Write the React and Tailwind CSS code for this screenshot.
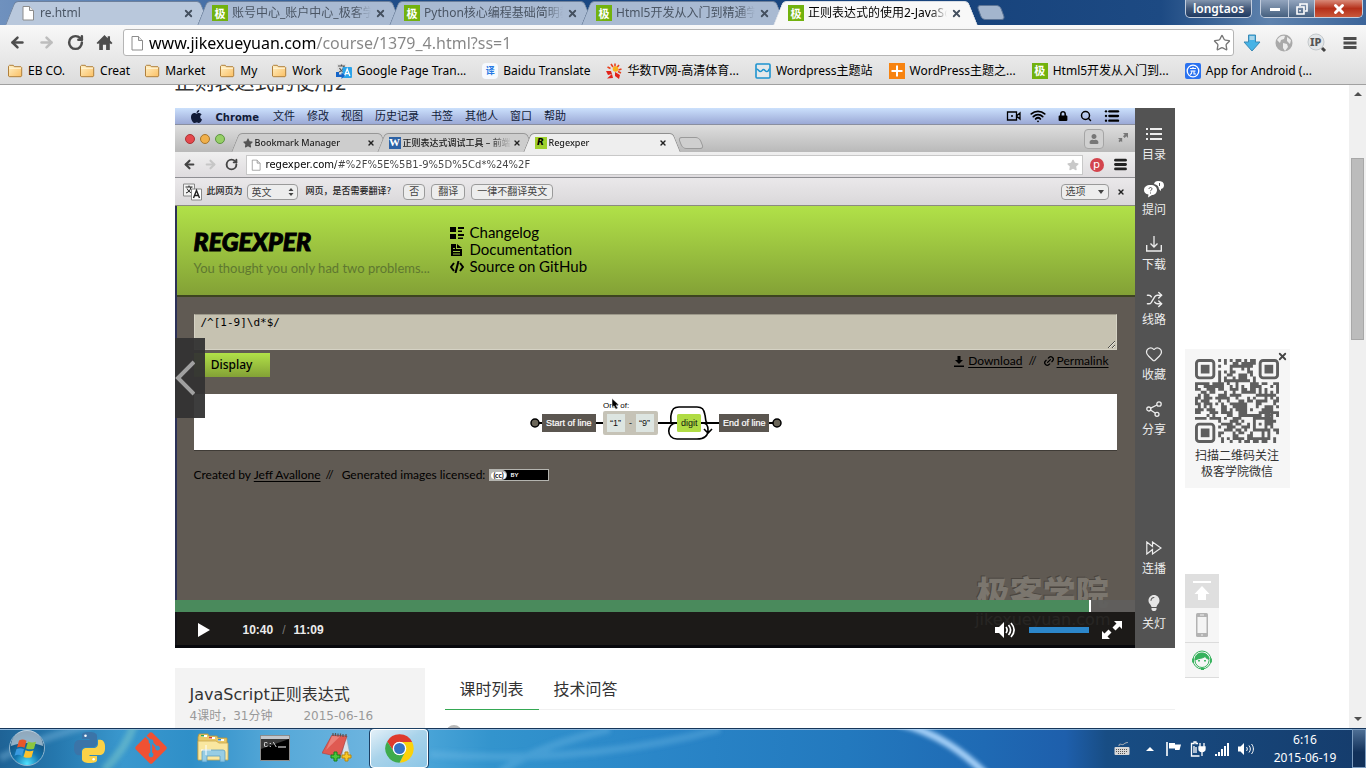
import React from "react";
import {
  ArrowLeft, ArrowRight, RotateCw, Star, Menu, Search, Wifi,
  List, Heart, Shuffle, Link2, X,
} from "lucide-react";
import { FaApple, FaGitAlt, FaStar, FaLightbulb, FaUser, FaLock } from "react-icons/fa";

const UI = "font-['Noto_Sans','Noto_Sans_CJK_SC',sans-serif]";
const MAC = "font-['DejaVu_Sans','Noto_Sans_CJK_SC',sans-serif]";
const GOTHIC = "font-['Lato','Noto_Sans_CJK_SC',sans-serif]";

/* ---------- shared pieces ---------- */

function TabShape({ paint }) {
  return (
    <span aria-hidden="true" className="absolute inset-0">
      <span className={`absolute inset-y-0 left-[5px] w-8 -skew-x-[22deg] rounded-tl-[4px] border-l border-t ${paint}`} />
      <span className={`absolute inset-y-0 right-[5px] w-8 skew-x-[22deg] rounded-tr-[4px] border-r border-t ${paint}`} />
      <span className={`absolute inset-y-0 left-5 right-5 border-t ${paint}`} />
    </span>
  );
}

function JiIcon() {
  return (
    <span className="flex size-4 shrink-0 items-center justify-center bg-[#72b20e] text-[11px] leading-none font-bold text-white">
      极
    </span>
  );
}

function PageIcon({ className }) {
  return (
    <svg viewBox="0 0 16 16" className={className} fill="#fff" stroke="#8c8c8c">
      <path d="M3 1.5h6.5l4 4v9.5H3z" />
      <path d="M9.5 1.5v4h4" fill="#e8e8e8" />
    </svg>
  );
}

function FolderIcon() {
  return (
    <svg viewBox="0 0 16 16" className="size-4 shrink-0">
      <defs>
        <linearGradient id="folder" x1="0" y1="0" x2="1" y2="1">
          <stop offset="0" stopColor="#fff0c4" />
          <stop offset="1" stopColor="#fbbf63" />
        </linearGradient>
      </defs>
      <path d="M1.5 13V3.2l1-.9h3.8l1 1.4h6.6l.8.8V13l-.7.7H2.2z" fill="url(#folder)" stroke="#b0803c" />
      <path d="M2.2 5.2h11.8" stroke="#fff8e0" />
    </svg>
  );
}

/* ---------- browser header ---------- */

const TABS = [
  { title: "re.html", page: true },
  { title: "账号中心_账户中心_极客学院" },
  { title: "Python核心编程基础简明教程" },
  { title: "Html5开发从入门到精通学习" },
  { title: "正则表达式的使用2-JavaScript", active: true },
];

function BrowserTab({ tab }) {
  const paint = tab.active
    ? "border-[#d8dde4] bg-[#f8f8f8]"
    : tab.page
      ? "border-[#6d809c] bg-[#b9c8dc]"
      : "border-[#6d809c] bg-[#a9bad2]";
  return (
    <div className={`relative -mr-[13px] h-full w-[205px] ${tab.active ? "z-10" : ""}`}>
      <TabShape paint={paint} />
      <div className="relative flex h-full items-center gap-1 pr-4 pl-[15px]">
        <button className={`flex min-w-0 flex-1 items-center gap-1 text-left ${tab.active ? "text-black" : "text-[#4a5564]"}`}>
          {tab.page ? <PageIcon className="size-4 shrink-0" /> : <JiIcon />}
          <span className="flex-1 overflow-hidden whitespace-nowrap [mask-image:linear-gradient(90deg,#000_88%,transparent)]">
            {tab.title}
          </span>
        </button>
        <button aria-label={`关闭 ${tab.title}`} className="text-[#44505f]">
          <X className="size-[11px]" strokeWidth={4} />
        </button>
      </div>
    </div>
  );
}

const BOOKMARKS = [
  { t: "EB CO.", k: "folder" },
  { t: "Creat", k: "folder" },
  { t: "Market", k: "folder" },
  { t: "My", k: "folder" },
  { t: "Work", k: "folder" },
  { t: "Google Page Tran...", k: "gt" },
  { t: "Baidu Translate", k: "bd" },
  { t: "华数TV网-高清体育...", k: "hs" },
  { t: "Wordpress主题站", k: "wp" },
  { t: "WordPress主题之...", k: "plus" },
  { t: "Html5开发从入门到...", k: "ji" },
  { t: "App for Android (...", k: "app" },
];

function BookmarkIcon({ k }) {
  if (k === "folder") return <FolderIcon />;
  if (k === "ji") return <JiIcon />;
  if (k === "gt")
    return (
      <svg viewBox="0 0 16 16" className="size-4 shrink-0">
        <path d="M1 1h9v10H1z" fill="#dcdcdc" />
        <path d="M2 3h7M5.5 1.5V3M3 9c3-1 4.5-3 5-6M3.5 5c1 2 2.5 3.5 4 4" stroke="#555" fill="none" strokeWidth="1.2" />
        <rect x="6.5" y="4" width="9.5" height="11" rx="1" fill="#2aa3ea" />
        <path d="M8.500 13l2.700-7 2.700 7M9.500 10.700h3.500" stroke="#fff" fill="none" strokeWidth="1.3" />
        <path d="M0 9h3v2.500h2.500V9.500L9 12.500 5.500 16v-2H0z" fill="#1464c8" />
      </svg>
    );
  if (k === "bd")
    return (
      <span className="flex size-4 shrink-0 items-center justify-center rounded-sm bg-[#f6f9fd] text-[9px] leading-none font-bold text-[#2577e3]">
        译
      </span>
    );
  if (k === "hs")
    return (
      <svg viewBox="0 0 16 16" className="size-4 shrink-0">
        <g stroke="#e8401e" strokeWidth="1.6">
          <path d="M5 1l2 3M9 .5v3M13 2l-2 2.500M15.500 6l-3 1M1.500 4l3 1.500M15 10l-3-1.500" />
        </g>
        <circle cx="9.500" cy="6" r="2.800" fill="#f9b01b" />
        <path d="M0 8l5 0 1 3-4 1zM1 15.500l5-4.500 1 4zM9 9l5 3-1 4-4-3z" fill="#e2231a" />
      </svg>
    );
  if (k === "wp")
    return (
      <svg viewBox="0 0 16 16" className="size-4 shrink-0">
        <rect x="1" y="1" width="14" height="14" rx="1" fill="#e4e8ea" stroke="#1d93cf" strokeWidth="1.6" />
        <path d="M1.500 6c2 0 2 2.500 4 2.500S7 6.500 8.500 6.500 10 8.500 12 8.500 13.500 6 14.500 6" fill="none" stroke="#1d93cf" strokeWidth="1.5" />
      </svg>
    );
  if (k === "plus")
    return (
      <svg viewBox="0 0 16 16" className="size-4 shrink-0">
        <path d="M0 0h16v16H0z" fill="#f78310" />
        <path d="M8 2.500v11M2.500 8h11" stroke="#fff" strokeWidth="2" />
      </svg>
    );
  return (
    <svg viewBox="0 0 16 16" className="size-4 shrink-0">
      <rect width="16" height="16" rx="2" fill="#2a72f0" />
      <circle cx="8" cy="8" r="5.800" fill="none" stroke="#fff" strokeWidth="1.3" />
      <path d="M5 5.500h6M8 4v1.500M5.500 8h5M7 8c0 2-.5 3-2 3.500M9 8v3h2" stroke="#fff" fill="none" strokeWidth="1.1" />
    </svg>
  );
}

function BrowserHeader() {
  return (
    <header className={`shrink-0 text-[12px] ${UI}`}>
      <div className="flex h-[25px] items-start justify-between bg-[linear-gradient(90deg,#6f91be_0,#4f78ae_12%,#1c4a86_30%,#17437c_70%,#1d4a83_85%,#5f83ae_93%,#3c659a_100%)]">
        <nav aria-label="标签页" className="flex h-full pt-px pl-[5px]">
          {TABS.map((t) => <BrowserTab key={t.title} tab={t} />)}
          <button aria-label="新标签页" className="mt-1 ml-[14px] h-[15px] w-6 skew-x-[20deg] rounded-sm border border-[#5d7596] bg-[#a3b5cd]" />
        </nav>
        <div className="flex gap-2 pr-[3px] text-white">
          <button className="h-[18px] w-[67px] rounded-b-[5px] border border-t-0 border-[#c3cede] bg-[linear-gradient(#8295ae,#43597a_50%,#1f3b62)] text-[12px] leading-[15px] font-semibold">
            longtaos
          </button>
          <div className="flex h-[18px] overflow-hidden rounded-b-[5px] border border-t-0 border-[#c3cede]">
            <button aria-label="最小化" className="flex w-7 items-end justify-center border-r border-[#c3cede] bg-[linear-gradient(#93a5be,#45607f)] pb-1.5">
              <span className="h-[3px] w-2.5 bg-white" />
            </button>
            <button aria-label="还原" className="flex w-[26px] items-center justify-center border-r border-[#c3cede] bg-[linear-gradient(#93a5be,#45607f)]">
              <svg viewBox="0 0 12 12" className="size-3 fill-none stroke-white stroke-[1.6]"><path d="M4 3V1h7v7H9M1 4h7v7H1zM4 7v1.500" /></svg>
            </button>
            <button aria-label="关闭" className="flex w-[47px] items-center justify-center bg-[linear-gradient(#d98a78,#b5301a_50%,#c9583a)]">
              <X className="size-3.5" strokeWidth={5} />
            </button>
          </div>
        </div>
      </div>
      <div className="border-b border-[#a0a0a0] bg-[linear-gradient(#f8f8f8,#dcdcdc)]">
        <div className="flex items-center pt-1 pr-[7px] pl-[9px] text-[#4d4d4d]">
          <div className="flex gap-3">
            <button aria-label="后退"><ArrowLeft className="size-[17px]" strokeWidth={3.5} /></button>
            <button aria-label="前进" className="text-[#bdbdbd]"><ArrowRight className="size-[17px]" strokeWidth={3.5} /></button>
            <button aria-label="刷新"><RotateCw className="size-[17px]" strokeWidth={3.5} /></button>
            <button aria-label="主页">
              <svg viewBox="0 0 16 16" className="size-[17px] fill-current"><path d="M8 1 .5 8.500l1.200 1L3 8.600V15h3.500v-5h3v5H13V8.600l1.300 1 1.200-1.100-2.300-2.300V2H11v2z" /></svg>
            </button>
          </div>
          <form className="ml-2.5 flex h-[27px] flex-1 items-center gap-1 rounded-[3px] border border-[#b5b5b5] bg-white px-[5px]" onSubmit={(e) => e.preventDefault()}>
            <PageIcon className="size-4 shrink-0" />
            <input
              aria-label="地址"
              defaultValue="www.jikexueyuan.com/course/1379_4.html?ss=1"
              className="h-full min-w-0 flex-1 bg-[linear-gradient(90deg,#000_168px,#858585_168px)] bg-clip-text text-[16px] text-transparent outline-none"
            />
            <button aria-label="加入书签" type="button" className="pr-px text-[#777]"><Star className="size-[18px] -mr-1" strokeWidth={1.8} /></button>
          </form>
          <div className="flex items-center gap-[14px] pl-[9px]">
            <button aria-label="下载">
              <svg viewBox="0 0 18 18" className="size-[18px]"><path d="M5.500 1h7v7H17l-8 9-8-9h4.500z" fill="#46b3e6" stroke="#3989b5" /><path d="M6.500 2h5v4h-5z" fill="#a7d3e8" /></svg>
            </button>
            <button aria-label="全球">
              <svg viewBox="0 0 18 18" className="size-[18px]"><circle cx="9" cy="9" r="8.500" fill="#a9a9a9" /><path d="M2 6c2-4 6-5 8-4l-1 3-3 1-1 3zM8 9l4 1 1 3-3 4-2-3zM12 3l4 3-1 4-3-3z" fill="#ececec" /></svg>
            </button>
            <button aria-label="IP">
              <svg viewBox="0 0 20 20" className="size-5"><circle cx="9" cy="9" r="8" fill="#e3e6e8" stroke="#c3c8cb" /><path d="m15 15 3 3" stroke="#444" strokeWidth="3" /><text x="3" y="13" fontSize="11" fontWeight="800" fill="#555">IP</text></svg>
            </button>
            <button aria-label="菜单">
              <svg viewBox="0 0 14 14" className="mx-0.5 size-3.5 fill-current"><path d="M.5 1h13v3H.5zM.5 5.500h13v3H.5zM.5 10h13v3H.5z" /></svg>
            </button>
          </div>
        </div>
        <nav aria-label="书签栏" className="flex h-7 items-center gap-[14px] overflow-hidden pt-px pl-[7px] text-black">
          {BOOKMARKS.map((b) => (
            <a key={b.t} href="#" className={`flex items-center gap-[5px] whitespace-nowrap ${b.k === "folder" ? "" : "mr-0.5"}`}>
              <BookmarkIcon k={b.k} />
              {b.t}
            </a>
          ))}
        </nav>
      </div>
    </header>
  );
}

/* ---------- video picture ---------- */

const MAC_TABS = [
  { title: "Bookmark Manager", icon: "star" },
  { title: "正则表达式调试工具 – 前端网", icon: "w" },
  { title: "Regexper", icon: "r", active: true },
];

function MacTab({ tab }) {
  return (
    <div className={`relative -mr-[14px] h-full w-40 ${tab.active ? "z-10" : ""}`}>
      <TabShape paint={tab.active ? "border-[#8f8f8f] bg-[#eeeeee]" : "border-[#979797] bg-[#cdcdcd]"} />
      <div className="relative flex h-full items-center gap-0.5 pr-[15px] pl-[13px]">
        <button className="flex min-w-0 flex-1 items-center gap-0.5 text-left text-[#222]">
          {tab.icon === "star" && <FaStar className="size-2.5 shrink-0 text-[#555]" />}
          {tab.icon === "w" && <span className="flex size-3 shrink-0 items-center justify-center bg-[#2d62a5] font-['Liberation_Serif',serif] text-[11px] font-bold text-white">W</span>}
          {tab.icon === "r" && <span className="flex size-3 shrink-0 items-center justify-center bg-[#9fd02c] text-[9px] font-bold italic text-black">R</span>}
          <span className="flex-1 overflow-hidden font-['Noto_Sans','Noto_Sans_CJK_SC',sans-serif] text-[9px] font-medium whitespace-nowrap [mask-image:linear-gradient(90deg,#000_80%,transparent)]">{tab.title}</span>
        </button>
        <button aria-label={`关闭 ${tab.title}`}><X className="size-2" strokeWidth={4} /></button>
      </div>
    </div>
  );
}

function MacBrowser() {
  return (
    <div className={`text-[9px] text-[#222] ${MAC}`}>
      <div className="flex h-4 items-center bg-[linear-gradient(#cbe0fc,#9ba9d6)] pr-[15px] pl-[14px] text-[11px] text-[#111b38]">
        <FaApple className="size-[15px]" />
        <div className="ml-3 flex items-center gap-3 pt-0.5 whitespace-nowrap">
          <span className="mr-0.5 text-[10px] font-bold">Chrome</span>
          <span>文件</span><span>修改</span><span>视图</span><span>历史记录</span><span>书签</span><span>其他人</span><span>窗口</span><span>帮助</span>
        </div>
        <div className="ml-auto flex items-center gap-3 text-black">
          <svg viewBox="0 0 16 12" className="h-3 w-4 fill-none stroke-current stroke-[1.3]"><path d="M1.500 2h9v8h-9zM10.500 6l3.500-3v6z" /><path d="M5 5.300h2v1.400H5z" className="fill-current stroke-none" /></svg>
          <Wifi className="-ml-1 size-4" strokeWidth={2.8} />
          <FaLock className="size-2.5" />
          <Search className="size-3" strokeWidth={3} />
          <List className="size-4" strokeWidth={3.5} />
        </div>
      </div>
      <div className="flex h-[28px] border-t border-[#8a8fa0] bg-[linear-gradient(#dedede,#b9b9b9)] pl-[10px]">
        <div className="flex items-center gap-[5px]">
          <span className="size-[10px] rounded-full border border-[#a33] bg-[#e5484d]" />
          <span className="size-[10px] rounded-full border border-[#a8752c] bg-[#f0b04a]" />
          <span className="size-[10px] rounded-full border border-[#5c9440] bg-[#96cf66]" />
        </div>
        <div className="flex pt-2 pl-[5px]">
          {MAC_TABS.map((t) => <MacTab key={t.title} tab={t} />)}
          <button aria-label="新标签" className="mt-1 ml-3 h-3 w-[22px] skew-x-[22deg] rounded-sm border border-[#9a9a9a] bg-[#cfcfcf]" />
        </div>
        <div className="ml-auto flex items-center gap-[14px] pr-[7px] text-[#777]">
          <button aria-label="用户" className="flex size-5 items-center justify-center rounded-sm border border-[#a5a5a5] bg-[#d0d0d0]"><FaUser className="size-2.5" /></button>
          <svg viewBox="0 0 12 12" className="mb-0.5 size-2.5 fill-current"><path d="M6 0h6v6l-2-2-2 2-2-2 2-2zM0 6h5v5l-1.500-1.500L2 11 .5 9.500 2 8z" /></svg>
        </div>
      </div>
      <div className="flex h-[26px] items-center border-b border-[#8f8f93] bg-[linear-gradient(#efefef,#dfdcdf)] pr-[7px] pl-2 text-[#444]">
        <div className="flex gap-2">
          <ArrowLeft className="size-[13px]" strokeWidth={4} />
          <ArrowRight className="size-[13px] text-[#c6c6c6]" strokeWidth={4} />
          <RotateCw className="size-[13px]" strokeWidth={3.5} />
        </div>
        <div className="ml-2 flex h-5 flex-1 items-center gap-1 border border-[#c8c8c8] bg-white px-[3px]">
          <PageIcon className="size-3" />
          <input aria-label="视频地址" defaultValue="regexper.com/#%2F%5E%5B1-9%5D%5Cd*%24%2F" className="min-w-0 flex-1 bg-[linear-gradient(90deg,#000_70px,#444_70px)] bg-clip-text text-[10px] text-transparent outline-none" />
          <FaStar className="size-3 text-[#c9c9c9]" />
        </div>
        <span className="ml-[7px] flex size-[14px] items-center justify-center rounded-full bg-[#d3444d] text-[11px] leading-none text-white">p</span>
        <Menu className="ml-[9px] size-[15px] text-[#222]" strokeWidth={4.5} />
      </div>
      <div className="flex h-[28px] items-center border-b border-[#8b8b80] bg-[linear-gradient(#eae8ea,#dad8da)] pr-2.5 pl-2 whitespace-nowrap">
        <svg viewBox="0 0 20 18" className="h-[18px] w-5 text-[#333]">
          <path d="M.5 1h11v12H.5z" fill="#f3f3f3" stroke="#888" />
          <path d="M2.500 4h7M6 2.500V4M3 10c3-1 4.500-3 5-6M4 5.500c1 2 2.500 3.500 4.500 4.500" stroke="#222" fill="none" />
          <path d="M8.500 6h10v11h-10z" fill="#fff" stroke="#888" />
          <path d="m10.500 15 3-7.500 3 7.500m-5-2.500h4" stroke="#222" fill="none" strokeWidth="1.4" />
        </svg>
        <label htmlFor="lang" className="ml-1 font-medium">此网页为</label>
        <select id="lang" className="ml-1 h-4 w-[51px] appearance-none rounded-sm border border-[#9a9a9a] bg-[#ededed] px-1 text-[10px] text-[#444]">
          <option>英文</option>
        </select>
        <svg viewBox="0 0 6 8" aria-hidden="true" className="-ml-2.5 h-2 w-1.5 fill-[#444]"><path d="M3 0l2.500 3h-5zM3 8l2.500-3h-5z" /></svg>
        <label htmlFor="lang" className="ml-3 font-medium">网页，是否需要翻译?</label>
        <div className="ml-3 flex gap-1.5 text-[10px] leading-[14px] text-[#444]">
          <button className="rounded-sm border border-[#9a9a9a] bg-[#ededed] px-[5px]">否</button>
          <button className="rounded-sm border border-[#9a9a9a] bg-[#ededed] px-1.5">翻译</button>
          <button className="rounded-sm border border-[#9a9a9a] bg-[#ededed] px-[5px]">一律不翻译英文</button>
        </div>
        <button className="ml-auto flex h-4 w-12 items-center justify-between rounded-sm border border-[#9a9a9a] bg-[#ededed] px-1 text-[10px] text-[#444]">
          选项<svg viewBox="0 0 6 4" className="h-1 w-1.5 fill-[#444]"><path d="M0 0h6L3 4z" /></svg>
        </button>
        <button aria-label="关闭翻译栏" className="ml-2"><X className="size-2" strokeWidth={4} /></button>
      </div>
    </div>
  );
}

function Diagram() {
  return (
    <svg viewBox="0 0 254 56" className="h-14 w-[254px] font-['Liberation_Sans',sans-serif] text-[9px]">
      <g fill="none" stroke="#000" strokeWidth="2">
        <path d="M6 29h72M128 29h22M166 29h28M240 29h10" />
        <path d="M139 29c5 0 2-3 3-8 1-6 3-8 8-8h18c5 0 7 2 8 8 1 5 0 8 4 8" strokeWidth="1.6" />
        <path d="M148 29c-11 0-11 16 0 16h20c8 0 11-3 11-9 0-4-1-7-5-7M175 35l4 4 4-4" strokeWidth="1.6" />
      </g>
      <g stroke="#000" strokeWidth="1.5" fill="#6b6659"><circle cx="6" cy="29" r="4" /><circle cx="248" cy="29" r="4" /></g>
      <path d="M13 20h54v18H13zM190 20h50v18h-50z" fill="#5b5650" />
      <rect x="74" y="17" width="55" height="24" rx="2" fill="#c6c3b7" />
      <path d="M78 20h18v18H78zM107 20h18v18h-18z" fill="#dde5e1" />
      <rect x="148" y="20" width="24" height="18" rx="1.5" fill="#b0dc44" />
      <g fill="#fff" stroke="#fff" strokeWidth=".2"><text x="17" y="32">Start of line</text><text x="194" y="32">End of line</text></g>
      <g fill="#111"><text x="81" y="32">“1”</text><text x="100" y="32">-</text><text x="110" y="32">“9”</text><text x="152" y="32">digit</text></g>
      <text x="74" y="14" className="text-[8px]">One of:</text>
      <path d="M83 4.500v9l2-1.700 1.800 3.500 1.800-1-1.600-3.300h3z" stroke="#fff" strokeWidth=".5" />
    </svg>
  );
}

function Regexper() {
  return (
    <div className={`flex flex-1 flex-col bg-[#605a53] text-black ${GOTHIC}`}>
      <div className="flex h-[91px] border-b-2 border-[#3d4420] bg-[linear-gradient(#b1e148,#83a136)] pl-[17px]">
        <div className="w-64 pt-[18px] whitespace-nowrap">
          <h2 className="text-[25px] leading-[34px] font-black italic [-webkit-text-stroke:1px_#000]">REGEXPER</h2>
          <p className="text-[13px] leading-5 text-[#5f7830]">You thought you only had two problems...</p>
        </div>
        <ul className="pt-[18px] text-[15px] leading-[17px]">
          <li className="flex items-center gap-1.5">
            <svg viewBox="0 0 14 12" className="h-3 w-3.5"><path d="M0 0h6v5H0zM0 7h6v5H0zM8 0h6v2H8zM8 3.500h4v1.500H8zM8 7h6v2H8zM8 10.500h5V12H8z" /></svg>
            <a href="#">Changelog</a>
          </li>
          <li className="flex items-center gap-1.5">
            <svg viewBox="0 0 14 12" className="h-3 w-3.5"><path fillRule="evenodd" d="M1 0h5v5h6v7H1zM7 0l5 4H7zM3 4v1h2V4zm0 3v1h7V7zm0 2.500v1h7v-1z" /></svg>
            <a href="#">Documentation</a>
          </li>
          <li className="flex items-center gap-1.5">
            <svg viewBox="0 0 14 12" className="h-3 w-3.5 fill-none stroke-black stroke-2"><path d="M4 2 1 6l3 4M10 2l3 4-3 4M8.500 0l-3 12" /></svg>
            <a href="#">Source on GitHub</a>
          </li>
        </ul>
      </div>
      <div className="flex flex-col pt-[17px] pr-[18px] pl-[17px]">
        <textarea
          aria-label="正则表达式"
          defaultValue={"/^[1-9]\\d*$/"}
          className="block h-9 w-full resize border border-t-[#9c988a] border-[#d5d2c4] bg-[#c6c2b1] px-1.5 py-px font-['DejaVu_Sans_Mono',monospace] text-[11px] leading-[13px] text-black"
        />
        <div className="flex h-11 items-start justify-between pt-[3px]">
          <button className="h-6 w-[76px] bg-[linear-gradient(#b1e148,#83a136)] font-['Noto_Sans',sans-serif] text-[12px] font-medium">Display</button>
          <div className="flex items-center pr-2 text-[12px] leading-4">
            <svg viewBox="0 0 10 11" className="mr-1 h-[11px] w-2.5"><path d="M3.500 0h3v4H9L5 8 1 4h2.500zM0 9.500h10V11H0z" /></svg>
            <a href="#" className="underline underline-offset-2">Download</a>
            <span className="mx-1.5">//</span>
            <Link2 className="mr-0.5 size-3 -rotate-45" strokeWidth={2.5} />
            <a href="#" className="underline underline-offset-2">Permalink</a>
          </div>
        </div>
        <div className="flex h-[57px] justify-center border-b border-[#3f3b36] bg-white pl-0.5">
          <Diagram />
        </div>
        <p className="mt-4 flex items-center text-[12px] leading-4 whitespace-nowrap">
          Created by&nbsp;<a href="#" className="underline underline-offset-2">Jeff Avallone</a>
          <span className="mx-[5px] mr-2">//</span>Generated images licensed:
          <span className="ml-1 flex h-3 w-[60px] items-center gap-1 border border-[#b5b5b0] bg-black text-[6px] leading-none font-bold text-white">
            <span className="flex h-full items-center rounded-r-full bg-[#b5b5b0] px-px text-black"><span className="rounded-full bg-white px-0.5 text-[7px]">(cc)</span></span>
            BY
          </span>
        </p>
      </div>
    </div>
  );
}

/* ---------- player ---------- */

const SIDE = [
  { t: "目录", i: "list" },
  { t: "提问", i: "ask" },
  { t: "下载", i: "down" },
  { t: "线路", i: "shuffle" },
  { t: "收藏", i: "heart" },
  { t: "分享", i: "share" },
];
const SIDE_END = [
  { t: "连播", i: "ff" },
  { t: "关灯", i: "bulb" },
];

function SideIcon({ i }) {
  if (i === "list")
    return <svg viewBox="0 0 16 12" className="h-3 w-4 fill-current"><path d="M0 0h2v2H0zM4 0h12v2H4zM0 5h2v2H0zM4 5h12v2H4zM0 10h2v2H0zM4 10h12v2H4z" /></svg>;
  if (i === "ask")
    return (
      <svg viewBox="0 0 22 18" className="h-[18px] w-[22px] fill-white">
        <path d="M15 1c4 0 6 1.500 6 4.300 0 2-1 3.200-3 3.700v2l-2-1.700c-.3-3-1.700-4.600-5-5.300.5-2 1.700-3 4-3z" />
        <path d="M7.500 5C11.500 5 14 7 14 10s-2.500 5-5 5l-4 2.500.5-3C2.500 14 1 12.500 1 10c0-3 2.500-5 6.500-5z" />
        <path d="M6 9c0-2 3-2 3 0 0 1-1.500 1-1.500 2.200M7.500 12.500v1M16.500 3v3" stroke="#535353" fill="none" />
      </svg>
    );
  if (i === "down")
    return <svg viewBox="0 0 16 16" className="size-4 fill-none stroke-current"><path d="M8 0v11M4.500 7.500 8 11l3.500-3.500" strokeWidth="1.3" /><path d="M.7 9v6h14.600V9" strokeWidth="1.4" /></svg>;
  if (i === "shuffle") return <Shuffle className="size-[17px]" strokeWidth={2} />;
  if (i === "heart") return <Heart className="size-[18px]" strokeWidth={1.6} />;
  if (i === "share")
    return <svg viewBox="0 0 16 16" className="size-4 fill-none stroke-current stroke-[1.3]"><circle cx="2.800" cy="8" r="2" /><circle cx="13" cy="3" r="2.200" /><circle cx="11" cy="13.300" r="2" /><path d="m4.700 7.200 6.200-3.200M4.500 9l5 3.200" /></svg>;
  if (i === "ff")
    return <svg viewBox="0 0 16 14" className="h-3.5 w-4 fill-none stroke-current stroke-[1.2]"><path d="M.8 1v12L6.500 8.500V13L15 7 6.500 1v4.500z" /></svg>;
  return <FaLightbulb className="size-4 text-[#e4e4e4]" />;
}

function SideItem({ item }) {
  return (
    <button className="flex h-[55px] w-full flex-col items-center gap-0.5 pr-px text-[#ececec]">
      <span className="flex h-5 items-center"><SideIcon i={item.i} /></span>
      <span className="text-[12px] leading-[18px]">{item.t}</span>
    </button>
  );
}

function Player() {
  return (
    <section aria-label="视频播放器" className="flex h-[540px]">
      <div className="relative flex min-w-0 flex-1 flex-col overflow-hidden">
        <div className="flex flex-1 flex-col bg-[#2c3157]">
          <MacBrowser />
          <div className="flex flex-1 pl-0.5"><Regexper /></div>
        </div>
        <button aria-label="上一节" className="absolute top-[230px] left-0 flex h-20 w-[30px] items-center bg-[#333333]/95 text-[#a0a0a0]">
          <svg viewBox="0 0 20 36" className="h-9 w-5 fill-none stroke-current stroke-4"><path d="M19 2 3 18l16 16" /></svg>
        </button>
        <div className="absolute right-6 bottom-5 text-center leading-none font-black">
          <p className="text-[33px] leading-[36px] text-[#7b766e] [text-shadow:-1px_-1px_0_#4a453f]">极客学院</p>
          <p className="text-[16px] leading-4 font-normal text-[#a8a39b]">jikexueyuan.com</p>
        </div>
        <div className="absolute inset-x-0 bottom-0">
          <div role="progressbar" aria-label="播放进度" aria-valuenow={95} className="flex h-3 bg-[#605f5d]/95">
            <span className="w-[95.5%] border-r-2 border-white bg-[#4a8a5c]" />
          </div>
          <div className="flex h-9 items-center border-b-[3px] border-[#07080c] bg-[#110f0e]/85 pt-0.5 pr-[13px] pl-[22px] font-['Liberation_Sans',sans-serif] text-[12px] font-bold text-[#ececec]">
            <button aria-label="播放"><svg viewBox="0 0 14 14" className="size-3.5 fill-white"><path d="M1 0v14l12-7z" /></svg></button>
            <span className="ml-8">10:40</span>
            <span className="mr-2 ml-[9px] font-normal text-[#777]">/</span>
            <span>11:09</span>
            <button aria-label="静音" className="ml-auto">
              <svg viewBox="0 0 20 16" className="h-4 w-5 fill-white"><path d="M0 5h4l5-5v16l-5-5H0z" /><path d="M11 5c1.500 2 1.500 4 0 6M13.500 3c2.500 3 2.500 7 0 10M16 1c4 4.500 4 9.500 0 14" fill="none" stroke="#fff" strokeWidth="1.7" /></svg>
            </button>
            <span role="meter" aria-label="音量" aria-valuenow={100} className="ml-[14px] h-1.5 w-[60px] bg-[#2c87cb]" />
            <button aria-label="全屏" className="ml-[13px]">
              <svg viewBox="0 0 20 20" className="size-5 fill-white"><path d="M12 1h8v8l-2.500-2.500-4 4-3-3 4-4zM0 19v-8l2.500 2.500 4-4 3 3-4 4L8 19z" /></svg>
            </button>
          </div>
        </div>
      </div>
      <nav aria-label="播放器工具" className="flex w-10 flex-col bg-[#535353] pt-4">
        {SIDE.map((s) => <SideItem key={s.t} item={s} />)}
        <div className="mt-auto">{SIDE_END.map((s) => <SideItem key={s.t} item={s} />)}</div>
      </nav>
    </section>
  );
}

/* ---------- floating tools ---------- */

const N = 29;
const inFinder = (x, y) => (x < 8 && y < 8) || (x > N - 9 && y < 8) || (x < 8 && y > N - 9);
const QR_PATH = (() => {
  let seed = 20150619;
  let d = "";
  for (let y = 0; y < N; y++)
    for (let x = 0; x < N; x++) {
      seed = (seed * 1103515245 + 12345) % 2147483648;
      const align = Math.max(Math.abs(x - 22), Math.abs(y - 22));
      const on = align <= 2 ? align !== 1 : seed / 2147483648 < 0.55;
      if (on && !inFinder(x, y)) d += `M${x} ${y}h1v1h-1z`;
    }
  return d;
})();

function QrCode() {
  return (
    <svg viewBox="0 0 29 29" className="size-[84px] fill-[#5f5f5f]" role="img" aria-label="微信二维码">
      <path d={QR_PATH} />
      {[[0, 0], [22, 0], [0, 22]].map(([x, y]) => (
        <g key={`${x}-${y}`}>
          <rect x={x + 0.5} y={y + 0.5} width="6" height="6" rx="1" fill="none" stroke="#5f5f5f" />
          <rect x={x + 2} y={y + 2} width="3" height="3" />
        </g>
      ))}
    </svg>
  );
}

function FloatingTools() {
  return (
    <>
      <aside className="absolute top-[264px] left-[calc(50%+510px)] flex w-[105px] flex-col items-center bg-[#f6f6f6] pt-2.5 pb-2 text-[12px] leading-4 text-[#333]">
        <button aria-label="关闭二维码" className="absolute top-0.5 right-0.5 text-[#444]"><X className="size-[11px]" strokeWidth={4} /></button>
        <QrCode />
        <p className="pt-[5px] text-center">扫描二维码关注<br />极客学院微信</p>
      </aside>
      <aside className="absolute top-[489px] left-[calc(50%+510px)] w-[34px]">
        <button aria-label="返回顶部" className="flex h-[34px] w-full items-center justify-center bg-[#dfdfdf]">
          <svg viewBox="0 0 18 20" className="h-5 w-[18px] fill-white"><path d="M0 0h18v2H0zM9 5l7.500 8H13v6H5v-6H1.500z" /></svg>
        </button>
        <button aria-label="手机版" className="flex h-[35px] w-full items-center justify-center border-b border-[#dcdcdc] bg-[#f6f6f6]">
          <svg viewBox="0 0 12 24" className="h-6 w-3"><rect width="12" height="24" rx="1.500" fill="#b3b3b3" /><path d="M1.500 4h9v16h-9z" fill="#f4f4f4" /><path d="M4 2h4M5 22h2" stroke="#eee" /></svg>
        </button>
        <button aria-label="客服" className="flex h-[35px] w-full items-center justify-center border-b border-[#dcdcdc] bg-[#f6f6f6]">
          <svg viewBox="0 0 20 20" className="size-5 fill-none stroke-[#36b25c]">
            <circle cx="10" cy="10" r="9" /><circle cx="10" cy="10.500" r="7" />
            <path d="M3 10c0-5 3-7 7-7s7 3 7 6c-2 0-3-1-4-2.500C11 8.500 7 8 3 10z" fill="#36b25c" />
            <path d="M1 8.500v4M19 8.500v4M7 10v1.500M13 10v1.500M9 19h3" strokeWidth="1.8" />
          </svg>
        </button>
      </aside>
    </>
  );
}

/* ---------- page ---------- */

function PageArea() {
  return (
    <div className="flex min-h-0 flex-1">
      <main className="relative min-w-0 flex-1 overflow-hidden bg-white font-['DejaVu_Sans','Noto_Sans_CJK_SC',sans-serif]">
        <div className="mx-auto -mt-4 w-[1000px]">
          <h1 className="text-[20px] leading-7 text-[#333]">正则表达式的使用2</h1>
          <div className="pt-[11px]"><Player /></div>
          <div className="flex gap-5 pt-5">
            <section className="h-40 w-[250px] bg-[#f3f3f3] px-[15px] pt-4">
              <h2 className="text-[16px] leading-[22px] text-[#333]">JavaScript正则表达式</h2>
              <p className="flex gap-[31px] text-[12px] leading-5 text-[#999]"><span>4课时，31分钟</span><span>2015-06-16</span></p>
            </section>
            <section className="flex-1">
              <nav aria-label="课程内容" className="flex border-b border-[#f0f0f0] text-[16px] leading-[38px] text-[#333]">
                <button className="-mb-px border-b border-[#35a853] px-[15px] pt-[3px]">课时列表</button>
                <button className="px-[15px] pt-[3px]">技术问答</button>
              </nav>
              <span className="mt-[15px] ml-px block size-4 rounded-full bg-[#b8b8b8]" />
            </section>
          </div>
        </div>
        <FloatingTools />
      </main>
      <div aria-hidden="true" className="flex w-[17px] flex-col items-center bg-[#f0f0f0]">
        <span className="mt-[7px] border-x-4 border-b-4 border-x-transparent border-b-[#505050]" />
        <span className="mt-[62px] h-[182px] w-[13px] border border-[#a8a8a8] bg-[#bcbcbc]" />
        <span className="mt-auto mb-[7px] border-x-4 border-t-4 border-x-transparent border-t-[#505050]" />
      </div>
    </div>
  );
}

/* ---------- taskbar ---------- */

function StartOrb() {
  return (
    <svg viewBox="0 0 38 38" className="size-[38px]">
      <defs>
        <radialGradient id="orb" cx=".5" cy=".95" r=".9">
          <stop offset="0" stopColor="#4fe3ff" /><stop offset=".4" stopColor="#1477b0" /><stop offset="1" stopColor="#123c63" />
        </radialGradient>
      </defs>
      <circle cx="19" cy="19" r="17.500" fill="url(#orb)" stroke="#8fb5cf" />
      <path d="M3 17a16 16 0 0 1 32 0c-10-4-22-4-32 0z" fill="#d5e3ec" opacity=".65" />
      <path d="M11 11.500c3-1.500 5-1 7.500.3l-2 7c-2.500-1.500-5-1.500-7.500-.3z" fill="#e8562a" />
      <path d="M20 12.500c3 1.300 5 1.300 8 .2l-2 7c-3 1-5 .8-8-.3z" fill="#8cc63f" />
      <path d="M8.500 20c2.500-1.200 5-1.200 7.500.3l-2 6.700c-2.500-1.500-5-1.500-7.500-.3z" fill="#3a9ae0" />
      <path d="M17.500 21.200c3 1.200 5 1.200 8 .2l-2 6.800c-3 1-5 .8-8-.3z" fill="#fcc22d" />
    </svg>
  );
}

function PythonLogo() {
  return (
    <svg viewBox="0 0 24 24" className="size-[31px]">
      <path fill="#3b74a8" d="M14.250.18l.9.2.73.26.59.3.45.32.34.34.25.34.16.33.1.3.04.26.02.2-.01.13V8.500l-.05.63-.13.55-.21.46-.26.38-.3.31-.33.25-.35.19-.35.14-.33.1-.3.07-.26.04-.21.02H8.770l-.69.05-.59.14-.5.22-.41.27-.33.32-.27.35-.2.36-.15.37-.1.35-.07.32-.04.27-.02.21v3.060H3.170l-.21-.03-.28-.07-.32-.12-.35-.18-.36-.26-.36-.36-.35-.46-.32-.59-.28-.73-.21-.88-.14-1.050-.05-1.230.06-1.220.16-1.040.24-.87.32-.71.36-.57.4-.44.42-.33.42-.24.4-.16.36-.1.32-.05.24-.01h.16l.06.01h8.160v-.83H6.180l-.01-2.750-.02-.37.05-.34.11-.31.17-.28.25-.26.31-.23.38-.2.44-.18.51-.15.58-.12.64-.1.71-.06.77-.04.84-.02 1.270.05z" />
      <path fill="#fbd247" d="M21.040 6.110l.28.06.32.12.35.18.36.27.36.35.35.47.32.59.28.73.21.88.14 1.040.05 1.230-.06 1.230-.16 1.040-.24.86-.32.71-.36.57-.4.45-.42.33-.42.24-.4.16-.36.09-.32.05-.24.02-.16-.01h-8.220v.82h5.840l.01 2.760.02.36-.05.34-.11.31-.17.29-.25.25-.31.24-.38.2-.44.17-.51.15-.58.13-.64.09-.71.07-.77.04-.84.01-1.270-.04-1.070-.14-.9-.2-.73-.25-.59-.3-.45-.33-.34-.34-.25-.34-.16-.33-.1-.3-.04-.25-.02-.2.01-.13v-5.340l.05-.64.13-.54.21-.46.26-.38.3-.32.33-.24.35-.2.35-.14.33-.1.3-.06.26-.04.21-.02.13-.01h5.840l.69-.05.59-.14.5-.21.41-.28.33-.32.27-.35.2-.36.15-.36.1-.35.07-.32.04-.28.02-.21V6.070h2.090z" />
      <circle cx="8.900" cy="2.900" r="1" fill="#fff" /><circle cx="15.200" cy="21.100" r="1" fill="#fff" />
    </svg>
  );
}

function ExplorerIcon() {
  return (
    <svg viewBox="0 0 32 30" className="h-[30px] w-8">
      <path d="M1 4l1-3h9l1 2h8l1 2h9v21H1z" fill="#e9c968" stroke="#b8953a" strokeWidth=".8" />
      <path d="M4 2h6v2H4zM12 4h6v2h-6zM21 6h6v2h-6z" fill="#fff" />
      <path d="M4 2h3v1.500H4z" fill="#2fa84a" /><path d="M12 4h3v1.500h-3z" fill="#d63d2d" /><path d="M21 6h3v1.500h-3z" fill="#2b8ad8" />
      <path d="M1 8h18l3 2h9v17H1z" fill="#f9e7a0" stroke="#c8a74e" strokeWidth=".8" />
      <path d="M5 29V19q0-2 2-2h19q2 0 2 2v10h-5v-6H10v6z" fill="#8dcbec" stroke="#4f97c4" strokeWidth=".8" opacity=".9" />
      <path d="M9 12v10M4 17h10" stroke="#fff" strokeWidth="1" />
    </svg>
  );
}

function CmdIcon() {
  return (
    <svg viewBox="0 0 30 26" className="h-[26px] w-[30px]">
      <path d="M.5.500h29v25H.5z" fill="#000" stroke="#8d8d8d" />
      <path d="M1 1h28v3H1z" fill="#c3c7cc" />
      <path d="M1 4h28L1 14z" fill="#3b3b3b" />
      <text x="3.500" y="12" fontSize="7.500" fill="#fff" className="font-['Liberation_Mono',monospace]">C:\</text>
      <path d="M18 12h8" stroke="#fff" />
    </svg>
  );
}

function NotepadIcon() {
  return (
    <svg viewBox="0 0 30 30" className="size-[30px]">
      <path d="M24 2l4 20-9 4z" fill="#d9e2ea" stroke="#9aa9b5" strokeWidth=".6" />
      <path d="M10 2l15 1-7 21L0 20z" fill="#df5a52" stroke="#b33a35" strokeWidth=".6" />
      <path d="M10 3l8 .5L4 17z" fill="#f0918a" opacity=".7" />
      <path d="M11 0v3M13.500 0v3M16 .5v3M18.500.500v3M21 1v3M24 1v3" stroke="#555" strokeWidth="1.2" />
      <path d="M12 19h3v3h3v3h-3v3h-3v-3H9v-3h3z" fill="#4cc63c" stroke="#16801a" />
      <path d="M23 19h3v3h3v3h-3v3h-3v-3h-3v-3h3z" fill="#fbc826" stroke="#b8860b" />
    </svg>
  );
}

function ChromeLogo() {
  return (
    <svg viewBox="0 0 48 48" className="size-[31px]">
      <path fill="#de3b2d" d="M4.900 13A22 22 0 0 1 43.600 14H24a10 10 0 0 0-8.700 15z" />
      <path fill="#fbd109" d="M24 14h19.600A22 22 0 0 1 24 46l8.700-17A10 10 0 0 0 24 14z" />
      <path fill="#3fab4c" d="M4.900 13l10.400 16a10 10 0 0 0 17.400 0L24 46A22 22 0 0 1 4.900 13z" />
      <circle cx="24" cy="24" r="10.500" fill="#fff" /><circle cx="24" cy="24" r="8.500" fill="#3573c4" />
    </svg>
  );
}

function TaskbarStreaks() {
  return (
    <svg aria-hidden="true" viewBox="0 0 1366 40" preserveAspectRatio="none" className="absolute inset-0 h-full w-full fill-none">
      <defs><filter id="soft" x="-20%" y="-50%" width="140%" height="200%"><feGaussianBlur stdDeviation="2" /></filter></defs>
      <g filter="url(#soft)">
        <path d="M898-6c40 10 65 30 88 52" stroke="#b5dbff" strokeWidth="7" opacity=".9" />
        <path d="M500 44c30-22 70-34 110-44M430 26c120 8 220-6 290-26" stroke="#7cc0ea" strokeWidth="8" opacity=".3" />
        <path d="M134-4c-6 18-16 32-30 46" stroke="#8fd8c8" strokeWidth="8" opacity=".4" />
        <path d="M0 30C30 14 60 4 90-4" stroke="#8dc4e4" strokeWidth="8" opacity=".35" />
      </g>
    </svg>
  );
}

const APPS = [
  ["Python", <PythonLogo />],
  ["Git", <FaGitAlt className="size-9 text-[#f05133]" />],
  ["资源管理器", <ExplorerIcon />],
  ["命令提示符", <CmdIcon />],
  ["记事本", <NotepadIcon />],
];

function Taskbar() {
  return (
    <footer className={`relative flex h-10 shrink-0 border-t border-[#17365a] bg-[linear-gradient(90deg,#1f6396_0,#2577ad_4%,#3a98ce_9%,#2f8fc8_14%,#55a8d8_20%,#6cb4df_27%,#4aa5d8_31%,#3394cd_36%,#2a86c8_48%,#2379be_62%,#1f6ab4_72%,#1e5fac_78%,#184d84_81%,#153c6c_100%)] text-white shadow-[inset_0_1px_0_#8fb8dd] ${UI}`}>
      <TaskbarStreaks />
      <div className="relative flex">
        <button aria-label="开始" className="flex w-[58px] items-center pb-px pl-2"><StartOrb /></button>
        {APPS.map(([name, icon]) => (
          <button key={name} aria-label={name} className="flex w-[62px] items-center justify-center pb-0.5">{icon}</button>
        ))}
        <button aria-label="Chrome" className="ml-0.5 flex w-[58px] items-center justify-center rounded-sm border border-white bg-[linear-gradient(150deg,#e3f0f8,#a9d3ea_45%,#8cc6e6)] pb-px shadow-[0_0_0_1px_#1c3f63]"><ChromeLogo /></button>
      </div>
      <div className="relative ml-auto flex items-center gap-2">
        <svg viewBox="0 0 16 14" className="mr-1 h-3.5 w-4"><path d="M5 4c0-4 3 0 5-2 1-1 2-1 4-2" fill="none" stroke="#bbb" /><rect x=".5" y="5" width="15" height="8" rx="1" fill="#d8d8d8" /><path d="M2 7.500h12M2 9.500h12M4 11.500h8" stroke="#555" strokeDasharray="1 1" /></svg>
        <button aria-label="显示隐藏的图标" className="mx-1"><span className="block border-x-4 border-b-4 border-x-transparent border-b-white" /></button>
        <svg viewBox="0 0 16 16" className="size-4"><path d="M1 1v14" stroke="#fff" strokeWidth="1.6" /><path d="M3 2h6v1.500h6L13.500 9H9V7.500H3z" fill="#fff" /></svg>
        <svg viewBox="0 0 16 16" className="size-4 fill-none stroke-white stroke-[1.3]"><path d="M8 2.500H6V1H4v1.500H1.500V15h8" /><path d="M4 5v7M6 6v6" /><path d="M10 2v4M14 2v4" /><path d="M9 6h6v2q0 2.500-3 2.500T9 8z" fill="#fff" /><path d="M12 10.500V15" /></svg>
        <svg viewBox="0 0 16 14" className="h-3.5 w-4 fill-white"><path d="M1 12h2v2H1zM4 10h2v4H4zM7 7h2v7H7zM10 4h2v10h-2zM13 1h2v13h-2z" /></svg>
        <svg viewBox="0 0 16 14" className="h-3.5 w-4"><path d="M0 4.500h2.500L6 1v12L2.500 9.500H0z" fill="#fff" /><path d="M8.500 5c1 1.300 1 2.700 0 4M11 3.500c1.800 2 1.800 5 0 7M13.500 2c2.500 3 2.500 7 0 10" fill="none" stroke="#fff" /></svg>
        <time className="mr-0.5 ml-1.5 w-[74px] text-center text-[12px] leading-[18px]">6:16<br />2015-06-19</time>
        <button aria-label="显示桌面" className="h-[39px] w-[14px] border border-[#7d9dc0] bg-[linear-gradient(#4d6e94,#12315a_60%)]" />
      </div>
    </footer>
  );
}

export default function App() {
  return (
    <div className="flex h-screen flex-col overflow-hidden">
      <BrowserHeader />
      <PageArea />
      <Taskbar />
    </div>
  );
}
